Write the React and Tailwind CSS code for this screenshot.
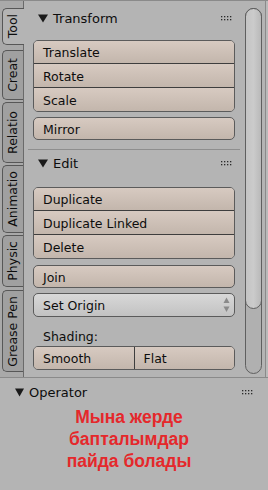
import React from "react";

function Dots() {
  const pts = [];
  for (const x of [0, 3, 6, 9]) for (const y of [0, 3]) pts.push([x, y]);
  return (
    <svg width="11" height="5" viewBox="0 0 11 5">
      {pts.map(([x, y]) => (
        <rect key={x + "-" + y} x={x} y={y} width="1.3" height="1.3" fill="#2a2a2a" />
      ))}
    </svg>
  );
}

function Tri() {
  return (
    <svg width="10" height="9" viewBox="0 0 10 9">
      <polygon points="0,0.5 10,0.5 5,8.5" fill="#1a1a1a" />
    </svg>
  );
}

function Header({ title, className = "" }) {
  return (
    <div className={"flex items-center h-[22px] pl-[10px] pr-[8px] " + className}>
      <Tri />
      <span className="ml-[5px] text-[13px] text-[#0d0d0d] leading-none">{title}</span>
      <div className="ml-auto flex items-center">
        <Dots />
      </div>
    </div>
  );
}

const btn =
  "flex items-center pl-[9px] pt-[3px] text-[12.5px] text-[#0d0d0d] leading-none bg-linear-to-b from-[#d7cac1] to-[#c3b6ac]";

function Group({ items, className = "" }) {
  const hs = ["h-[22px]", "h-[24px]", "h-[24px]"];
  return (
    <div className={"mx-[5px] rounded-[5px] border border-[#5b5b5b] overflow-hidden " + className}>
      {items.map((t, i) => (
        <div key={t} className={btn + " " + hs[i] + (i > 0 ? " border-t border-[#3e3e3e]" : "")}>
          {t}
        </div>
      ))}
    </div>
  );
}

function Single({ label, h, className = "" }) {
  return (
    <div className={"mx-[5px] rounded-[5px] border border-[#5b5b5b] " + btn + " " + h + " " + className}>
      {label}
    </div>
  );
}

function Tab({ label, h, mt, active }) {
  return (
    <div
      className={
        "ml-[2px] rounded-l-[5px] border border-r-0 border-[#575757] flex items-center justify-center relative z-10 " +
        h +
        " " +
        mt +
        (active ? " w-[22px] bg-[#b4b4b4]" : " w-[21px] bg-[#a0a0a0]")
      }
    >
      <span className="[writing-mode:vertical-rl] rotate-180 text-[12.5px] leading-none text-[#0d0d0d] whitespace-nowrap">
        {label}
      </span>
    </div>
  );
}

export default function App() {
  return (
    <div className="w-[268px] h-[490px] overflow-hidden bg-[#b4b4b4] font-['DejaVu_Sans',sans-serif] select-none">
      <div className="h-[377px] flex border-t border-[#8a8a8a]">
        {/* tab strip */}
        <div className="w-[24px] shrink-0 bg-[#a9a9a9] border-r border-[#6a6a6a] flex flex-col">
          <Tab label="Tool" h="h-[37px]" mt="mt-[7px]" active />
          <Tab label="Creat" h="h-[50px]" mt="mt-[5px]" />
          <Tab label="Relatio" h="h-[61px]" mt="mt-[2px]" />
          <Tab label="Animatio" h="h-[68px]" mt="mt-[2px]" />
          <Tab label="Physic" h="h-[52px]" mt="mt-[2px]" />
          <Tab label="Grease Pen" h="h-[82px]" mt="mt-[3px]" />
        </div>

        {/* panels */}
        <div className="w-[221px] shrink-0 pl-[4px] pr-[5px] flex flex-col">
          <Header title="Transform" className="mt-[6px]" />
          <Group items={["Translate", "Rotate", "Scale"]} className="mt-[11px]" />
          <Single label="Mirror" h="h-[23px]" className="mt-[5px]" />
          <div className="mt-[9px] h-px bg-[#8e8e8e]" />
          <Header title="Edit" className="mt-[2px]" />
          <Group items={["Duplicate", "Duplicate Linked", "Delete"]} className="mt-[13px]" />
          <Single label="Join" h="h-[23px]" className="mt-[6px]" />
          <div className="mx-[5px] mt-[5px] h-[24px] rounded-[5px] border border-[#5b5b5b] flex items-center pl-[9px] pr-[4px] text-[12.5px] text-[#0d0d0d] leading-none bg-linear-to-b from-[#d8d8d8] to-[#c2c2c2]">
            <span className="pt-[3px]">Set Origin</span>
            <svg className="ml-auto" width="7" height="16" viewBox="0 0 7 16">
              <polygon points="3.5,0.5 6.5,6 0.5,6" fill="#8a8a8a" />
              <polygon points="0.5,9.5 6.5,9.5 3.5,15" fill="#8a8a8a" />
            </svg>
          </div>
          <div className="mt-[12px] h-[16px] pl-[15px] flex items-center text-[12.5px] text-[#0d0d0d] leading-none">
            Shading:
          </div>
          <div className="mx-[5px] mt-[1px] h-[24px] rounded-[5px] border border-[#5b5b5b] overflow-hidden flex">
            <div className={btn + " flex-1"}>Smooth</div>
            <div className={btn + " flex-1 border-l border-[#3e3e3e]"}>Flat</div>
          </div>
        </div>

        {/* scrollbar */}
        <div className="w-[17px] shrink-0 pt-[7px] pb-[3px] flex flex-col">
          <div className="h-[366px] rounded-full border border-[#5f5f5f] bg-[#b0b0b0] flex flex-col">
            <div className="-mx-px -mt-px h-[301px] rounded-full border border-[#5f5f5f] bg-linear-to-r from-[#c4c4c4] via-[#cbcbcb] to-[#b9b9b9]" />
          </div>
        </div>
        <div className="w-[3px] shrink-0" />
        <div className="w-px shrink-0 bg-[#8a8a8a]" />
        <div className="w-[2px] shrink-0 bg-[#b9b9b9]" />
      </div>

      {/* operator */}
      <div className="h-[113px] border-t border-[#8a8a8a] flex flex-col">
        <div className="mt-[4px] h-[20px] flex items-center pl-[15px] pr-[15px]">
          <svg width="9" height="9" viewBox="0 0 9 9">
            <polygon points="0,0.5 9,0.5 4.5,8.5" fill="#1a1a1a" />
          </svg>
          <span className="ml-[5px] text-[13px] text-[#0d0d0d] leading-none">Operator</span>
          <div className="ml-auto flex items-center">
            <Dots />
          </div>
        </div>
        <div className="mt-[4px] w-[258px] text-center font-['Liberation_Sans',sans-serif] font-bold text-[17.5px] leading-[22px] text-[#e5282b]">
          <div>Мына жерде</div>
          <div>бапталымдар</div>
          <div>пайда болады</div>
        </div>
      </div>
    </div>
  );
}
